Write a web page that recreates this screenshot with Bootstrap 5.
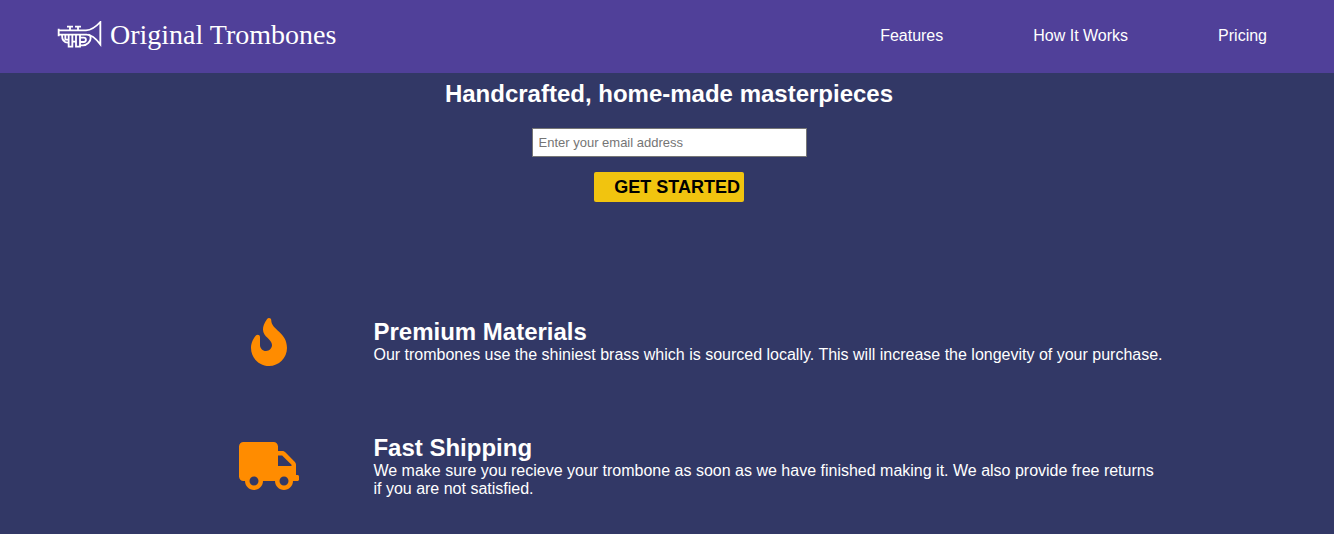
<!DOCTYPE html>
<html lang="en">
<head>
<meta charset="utf-8">
<meta name="viewport" content="width=device-width, initial-scale=1">
<title>Original Trombones</title>
<link href="https://cdn.jsdelivr.net/npm/bootstrap@5.3.0/dist/css/bootstrap.min.css" rel="stylesheet">
<style>
body{background:#323866;color:#fff;font-family:"Liberation Sans",Arial,sans-serif;font-size:16px;line-height:18px}
.site-header{background:#504099;min-height:73px;padding:0 67px 2px 57px}
.brand-link{padding-bottom:2px}
.brand-name{font-family:"Liberation Serif","Times New Roman",serif;font-size:28px;line-height:36px}
.site-links{gap:90px}
h1,h2{font-size:24px;line-height:28px;font-weight:700;margin:0}
.hero{padding:7px 0 0 4px}
.signup{margin-top:20px;gap:15px}
.email-box{width:275px;height:29px;border:1px solid #767676;border-radius:0;padding:1px 6px;font-size:13px;color:#000}
.email-box::placeholder{color:#757575;opacity:1}
.start-btn{width:150px;height:30px;background:#f1c40f;border-radius:2px;font-size:18px;line-height:30px;font-weight:700;color:#000;padding:0 4px;text-align:right}
.start-btn:hover{background:#ffd42a}
.feature-list{margin:108px 12.7% 0 17.5%}
.feature-row{min-height:116px}
.feature-icon{width:140px;padding-right:68px}
.feature-icon svg{height:48px;fill:#ff8c00}
</style>
</head>
<body>
<header class="site-header d-flex align-items-center justify-content-between">
<a href="#" class="brand-link d-flex align-items-center gap-2 text-white text-decoration-none">
<svg width="45" height="28" viewBox="21 33 135 84" fill="none" stroke="#fff" stroke-width="5.5" aria-hidden="true">
<path d="M26 56V79M26 61H108C126 60 141 47 151 36V103C141 90 126 74 110 74H26M51 50H69M75 50H93M60 50V60M84 50V60"/>
<path d="M36 74C36 88 42 98 54 98M46 74V89H54M56 74V110H67V74M67 95H78M78 74V110H90V74M90 83H101C110 83 110 96 101 96H90M90 106H99C112 106 122 94 122 84C122 79 119 75 115 74"/>
</svg>
<span class="brand-name">Original Trombones</span>
</a>
<nav class="site-links d-flex flex-wrap" aria-label="Main">
<a href="#features" class="text-white text-decoration-none">Features</a>
<a href="#how" class="text-white text-decoration-none">How It Works</a>
<a href="#pricing" class="text-white text-decoration-none">Pricing</a>
</nav>
</header>
<main>
<section class="hero text-center">
<h1>Handcrafted, home-made masterpieces</h1>
<form class="signup d-flex flex-column align-items-center">
<input id="email" type="email" class="email-box" placeholder="Enter your email address" aria-label="Email address">
<button type="submit" class="btn start-btn border-0">GET STARTED</button>
</form>
</section>
<section id="features" class="feature-list">
<div class="feature-row d-flex">
<div class="feature-icon flex-shrink-0 d-flex justify-content-center pt-2"><svg viewBox="0 0 384 512" aria-hidden="true"><path d="M216 23.86c0-23.8-30.65-32.77-44.15-13.04C48 191.85 224 200 224 288c0 35.63-29.11 64.46-64.85 63.99-35.17-.45-63.15-29.77-63.15-64.94v-85.51c0-21.7-26.47-32.23-41.43-16.5C27.8 213.16 0 261.33 0 320c0 105.87 86.13 192 192 192s192-86.13 192-192c0-170.29-168-193-168-296.14z"/></svg></div>
<div class="pt-2"><h2>Premium Materials</h2><p class="mb-0">Our trombones use the shiniest brass which is sourced locally. This will increase the longevity of your purchase.</p></div>
</div>
<div class="feature-row d-flex">
<div class="feature-icon flex-shrink-0 d-flex justify-content-center pt-3"><svg viewBox="0 0 640 512" aria-hidden="true"><path d="M624 352h-16V243.9c0-12.7-5.1-24.9-14.1-33.9L494 110.1c-9-9-21.2-14.1-33.9-14.1H416V48c0-26.5-21.5-48-48-48H48C21.5 0 0 21.5 0 48v320c0 26.5 21.5 48 48 48h16c0 53 43 96 96 96s96-43 96-96h128c0 53 43 96 96 96s96-43 96-96h48c8.8 0 16-7.2 16-16v-32c0-8.8-7.2-16-16-16zM160 464c-26.5 0-48-21.5-48-48s21.5-48 48-48 48 21.5 48 48-21.5 48-48 48zm320 0c-26.5 0-48-21.5-48-48s21.5-48 48-48 48 21.5 48 48-21.5 48-48 48zm80-208H416V144h44.1l99.9 99.9V256z"/></svg></div>
<div class="pt-2"><h2>Fast Shipping</h2><p class="mb-0">We make sure you recieve your trombone as soon as we have finished making it. We also provide free returns if you are not satisfied.</p></div>
</div>
</section>
</main>
<script src="https://cdn.jsdelivr.net/npm/bootstrap@5.3.0/dist/js/bootstrap.bundle.min.js"></script>
</body>
</html>
